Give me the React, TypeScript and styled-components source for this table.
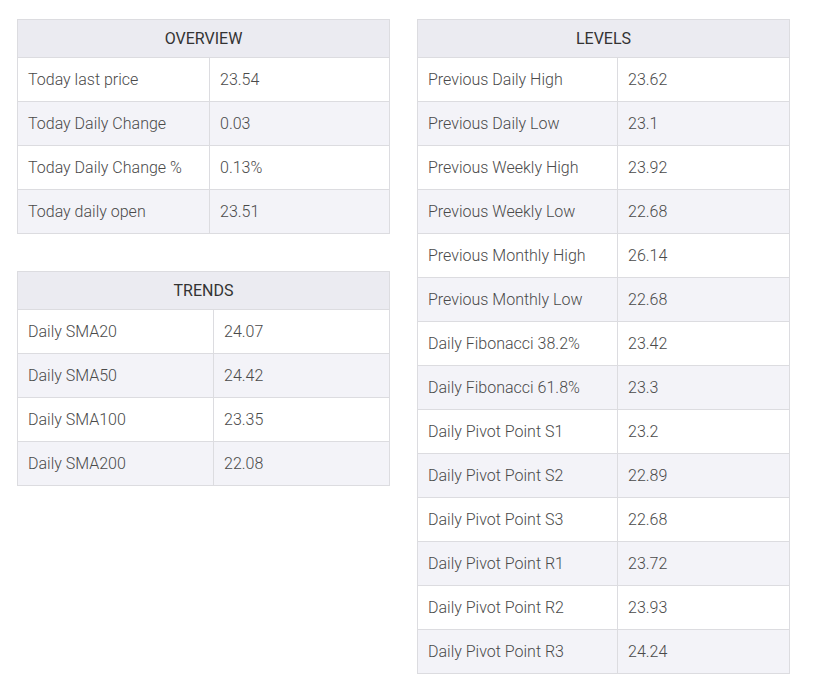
import React from "react";
import styled, { createGlobalStyle } from "styled-components";

const Global = createGlobalStyle`
  html, body { margin: 0; padding: 0; background: #fff; }
  body { font-family: Roboto, "Liberation Sans", sans-serif; }
`;

const Page = styled.div`
  display: flex;
  align-items: flex-start;
  gap: 27px;
  padding: 19px 0 0 17px;
`;

const Column = styled.div`
  display: flex;
  flex-direction: column;
  gap: 37px;
  width: 373px;
`;

const Table = styled.table`
  width: 373px;
  border-collapse: collapse;
  table-layout: fixed;
  font-size: 16px;
  font-weight: 300;
  color: #4a4a4a;
`;

const Head = styled.th`
  box-sizing: border-box;
  height: 38px;
  padding: 1px 0 0;
  background: #ebebf1;
  border: 1px solid #dcdce0;
  font-weight: 400;
  text-align: center;
  text-transform: uppercase;
  vertical-align: middle;
  color: #333;
  line-height: 1;
`;

const Row = styled.tr<{ $alt: boolean }>`
  background: ${(p) => (p.$alt ? "#f3f3f8" : "#fff")};
`;

const Cell = styled.td`
  box-sizing: border-box;
  height: 44px;
  padding: 1px 10px 0;
  border: 1px solid #dcdce0;
  vertical-align: middle;
  line-height: 1;
`;

type Data = [string, string][];

const DataTable = ({ title, rows, labelWidth }: { title: string; rows: Data; labelWidth: number }) => (
  <Table>
    <colgroup>
      <col style={{ width: labelWidth }} />
      <col />
    </colgroup>
    <thead>
      <tr>
        <Head colSpan={2}>{title}</Head>
      </tr>
    </thead>
    <tbody>
      {rows.map(([k, v], i) => (
        <Row key={k} $alt={i % 2 === 1}>
          <Cell>{k}</Cell>
          <Cell>{v}</Cell>
        </Row>
      ))}
    </tbody>
  </Table>
);

const overview: Data = [
  ["Today last price", "23.54"],
  ["Today Daily Change", "0.03"],
  ["Today Daily Change %", "0.13%"],
  ["Today daily open", "23.51"],
];

const trends: Data = [
  ["Daily SMA20", "24.07"],
  ["Daily SMA50", "24.42"],
  ["Daily SMA100", "23.35"],
  ["Daily SMA200", "22.08"],
];

const levels: Data = [
  ["Previous Daily High", "23.62"],
  ["Previous Daily Low", "23.1"],
  ["Previous Weekly High", "23.92"],
  ["Previous Weekly Low", "22.68"],
  ["Previous Monthly High", "26.14"],
  ["Previous Monthly Low", "22.68"],
  ["Daily Fibonacci 38.2%", "23.42"],
  ["Daily Fibonacci 61.8%", "23.3"],
  ["Daily Pivot Point S1", "23.2"],
  ["Daily Pivot Point S2", "22.89"],
  ["Daily Pivot Point S3", "22.68"],
  ["Daily Pivot Point R1", "23.72"],
  ["Daily Pivot Point R2", "23.93"],
  ["Daily Pivot Point R3", "24.24"],
];

export default function App() {
  return (
    <>
      <Global />
      <Page>
        <Column>
          <DataTable title="Overview" rows={overview} labelWidth={192} />
          <DataTable title="Trends" rows={trends} labelWidth={196} />
        </Column>
        <Column>
          <DataTable title="Levels" rows={levels} labelWidth={200} />
        </Column>
      </Page>
    </>
  );
}
